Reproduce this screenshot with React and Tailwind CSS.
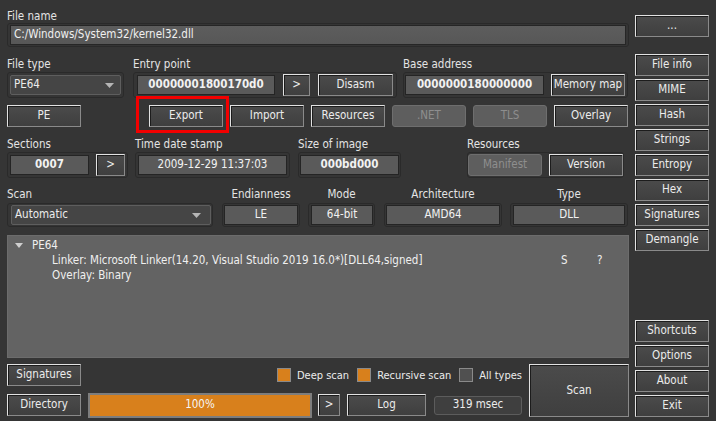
import React from "react";

const BTN =
  "flex items-center justify-center h-[22px] shrink-0 border border-t-[#e2e2e2] border-l-[#e2e2e2] border-r-[#8a8a8a] border-b-[#8a8a8a] bg-linear-to-b from-[#4b4b4b] to-[#3f3f3f] shadow-[inset_1px_1px_0_#1c1c1c] text-[#ececec] leading-none";
const DIS =
  "flex items-center justify-center h-[22px] shrink-0 border border-[#6e6e6e] rounded-[3px] bg-[#5e5e5e] text-[#8e8e8e] leading-none";
const FRAME = "flex items-center border border-[#2a2a2a] rounded-[3px]";
const FIELD =
  "flex items-center justify-center h-[20px] shrink-0 bg-[#5a5a5a] border border-[#242424] text-[#f2f2f2] leading-none";

function Btn({ className = "", children }) {
  return <div className={`${BTN} ${className}`}>{children}</div>;
}

function Label({ className = "", children }) {
  return <div className={`h-[15px] leading-[16px] text-[#e4e4e4] whitespace-nowrap ${className}`}>{children}</div>;
}

function Arrow() {
  return (
    <svg width="9" height="5" viewBox="0 0 9 5">
      <path d="M0 0h9L4.5 5z" fill="#b5b5b5" />
    </svg>
  );
}

function Combo({ className = "", text, arrowPad = "pr-[8px]" }) {
  return (
    <div
      className={`flex items-center justify-between h-[20px] bg-[#454545] border border-[#5e5e5e] rounded-[2px] pl-[3px] ${arrowPad} ${className}`}
    >
      <span className="leading-none text-[#ececec]">{text}</span>
      <Arrow />
    </div>
  );
}

function Check({ on, label }) {
  return (
    <div className="flex items-center">
      <div
        className={`w-[14px] h-[14px] border border-[#8a8a8a] ${on ? "bg-[#d8801c]" : "bg-[#505050]"}`}
      />
      <span className="ml-[6px] leading-none text-[11px] text-[#ececec]">{label}</span>
    </div>
  );
}

export default function App() {
  return (
    <div className="w-[716px] h-[421px] overflow-hidden bg-[#353535] flex pl-[7px] gap-[6px] text-[11.5px] text-[#e6e6e6] font-['DejaVu_Sans_Condensed','Liberation_Sans',Arial,sans-serif]">
      {/* Left column */}
      <div className="flex flex-col w-[622px] pt-[8px]">
        <Label>File name</Label>
        <div className="border border-[#2a2a2a] rounded-[3px] px-[2px] py-[1px]">
          <div className="h-[20px] bg-linear-to-b from-[#5d5d5d] to-[#575757] border border-[#262626] flex items-center px-[3px] leading-none text-[#f0f0f0]">
            C:/Windows/System32/kernel32.dll
          </div>
        </div>

        {/* Row: file type / entry point / base address */}
        <div className="flex mt-[9px]">
          <div className="flex flex-col w-[117px]">
            <Label>File type</Label>
            <div className={`${FRAME} mt-[1px] h-[26px] px-[2px]`}>
              <Combo className="w-[111px]" text="PE64" arrowPad="pr-[6px]" />
            </div>
          </div>
          <div className="flex flex-col ml-[9px]">
            <Label>Entry point</Label>
            <div className={`${FRAME} mt-[1px] h-[26px] px-[3px] gap-[8px]`}>
              <div className={`${FIELD} w-[138px] font-bold`}>00000001800170d0</div>
              <Btn className="w-[27px]">&gt;</Btn>
              <Btn className="w-[75px]">Disasm</Btn>
            </div>
          </div>
          <div className="flex flex-col ml-[6px]">
            <Label>Base address</Label>
            <div className={`${FRAME} mt-[1px] h-[26px] pl-[1px] pr-[2px] gap-[7px]`}>
              <div className={`${FIELD} w-[139px] font-bold`}>0000000180000000</div>
              <Btn className="w-[74px]">Memory map</Btn>
            </div>
          </div>
        </div>

        {/* Row: buttons */}
        <div className="flex mt-[7px]">
          <Btn className="w-[74px]">PE</Btn>
          <div className="relative ml-[68px]">
            <Btn className="w-[74px]">Export</Btn>
            <div className="absolute left-[-13px] right-[-6px] top-[-9px] bottom-[-6px] border-[3px] border-[#f20000]" />
          </div>
          <Btn className="w-[74px] ml-[7px]">Import</Btn>
          <Btn className="w-[74px] ml-[7px]">Resources</Btn>
          <div className={`${DIS} w-[74px] ml-[7px]`}>.NET</div>
          <div className={`${DIS} w-[74px] ml-[7px]`}>TLS</div>
          <Btn className="w-[74px] ml-[7px]">Overlay</Btn>
        </div>

        {/* Row: sections / time / size / resources */}
        <div className="flex mt-[9px]">
          <div className="flex flex-col">
            <Label>Sections</Label>
            <div className={`${FRAME} mt-[1px] h-[26px] pl-[2px] pr-[2px] gap-[7px]`}>
              <div className={`${FIELD} w-[79px] font-bold`}>0007</div>
              <Btn className="w-[29px]">&gt;</Btn>
            </div>
          </div>
          <div className="flex flex-col ml-[7px]">
            <Label>Time date stamp</Label>
            <div className={`${FRAME} mt-[1px] h-[26px] px-[2px]`}>
              <div className={`${FIELD} w-[149px]`}>2009-12-29 11:37:03</div>
            </div>
          </div>
          <div className="flex flex-col ml-[8px]">
            <Label>Size of image</Label>
            <div className={`${FRAME} mt-[1px] h-[26px] px-[1px]`}>
              <div className={`${FIELD} w-[99px] font-bold`}>000bd000</div>
            </div>
          </div>
          <div className="flex flex-col ml-[66px]">
            <Label>Resources</Label>
            <div className={`${FRAME} mt-[1px] h-[26px] px-[0px] gap-[7px]`}>
              <div className={`${DIS} w-[74px]`}>Manifest</div>
              <Btn className="w-[74px]">Version</Btn>
            </div>
          </div>
        </div>

        {/* Row: scan / endianness / mode / architecture / type */}
        <div className="flex mt-[8px]">
          <div className="flex flex-col">
            <Label>Scan</Label>
            <div className={`${FRAME} mt-[2px] h-[24px] pl-[3px] pr-[1px]`}>
              <Combo className="w-[200px]" text="Automatic" arrowPad="pr-[9px]" />
            </div>
          </div>
          <div className="flex flex-col ml-[9px]">
            <Label className="text-center">Endianness</Label>
            <div className={`${FRAME} mt-[2px] h-[24px] px-[1px]`}>
              <div className={`${FIELD} w-[74px]`}>LE</div>
            </div>
          </div>
          <div className="flex flex-col ml-[8px]">
            <Label className="text-center">Mode</Label>
            <div className={`${FRAME} mt-[2px] h-[24px] pl-[2px] pr-[1px]`}>
              <div className={`${FIELD} w-[62px]`}>64-bit</div>
            </div>
          </div>
          <div className="flex flex-col ml-[9px]">
            <Label className="text-center">Architecture</Label>
            <div className={`${FRAME} mt-[2px] h-[24px] px-[1px]`}>
              <div className={`${FIELD} w-[114px]`}>AMD64</div>
            </div>
          </div>
          <div className="flex flex-col ml-[8px]">
            <Label className="text-center">Type</Label>
            <div className={`${FRAME} mt-[2px] h-[24px] px-[2px]`}>
              <div className={`${FIELD} w-[112px]`}>DLL</div>
            </div>
          </div>
        </div>

        {/* Log tree area */}
        <div className="mt-[8px] h-[123px] bg-[#636363] border border-[#6c6c6c] pt-[2px] text-[#f0f0f0]">
          <div className="flex items-center h-[15px] leading-[15px]">
            <svg className="ml-[7px]" width="8" height="5" viewBox="0 0 8 5">
              <path d="M0 0h8L4 5z" fill="#cfcfcf" />
            </svg>
            <span className="ml-[9px]">PE64</span>
          </div>
          <div className="flex h-[15px] leading-[15px] pl-[44px]">
            <span className="w-[509px] whitespace-nowrap">
              Linker: Microsoft Linker(14.20, Visual Studio 2019 16.0*)[DLL64,signed]
            </span>
            <span className="w-[36px]">S</span>
            <span>?</span>
          </div>
          <div className="h-[15px] leading-[15px] pl-[44px]">Overlay: Binary</div>
        </div>

        {/* Bottom area */}
        <div className="flex mt-[6px] gap-[7px]">
          <div className="flex flex-col w-[515px]">
            <div className="flex items-center h-[22px]">
              <Btn className="w-[74px]">Signatures</Btn>
              <div className="ml-auto flex items-center gap-[8px]">
                <Check on label="Deep scan" />
                <Check on label="Recursive scan" />
                <Check label="All types" />
              </div>
            </div>
            <div className="flex items-center h-[22px] mt-[8px]">
              <Btn className="w-[74px]">Directory</Btn>
              <div className="ml-[7px] w-[224px] h-[25px] border-2 border-[#7d7d7d] bg-[#d8801c] flex items-center justify-center leading-none text-[#f6f6f6]">
                100%
              </div>
              <Btn className="w-[22px] ml-[6px]">&gt;</Btn>
              <Btn className="w-[79px] ml-[7px]">Log</Btn>
              <div className="ml-[8px] w-[88px] h-[19px] flex items-center justify-center bg-[#3f3f3f] border border-[#5c5c5c] rounded-[3px] leading-none text-[#ececec]">
                319 msec
              </div>
            </div>
          </div>
          <Btn className="w-[100px] h-[53px]">Scan</Btn>
        </div>
      </div>

      {/* Right column */}
      <div className="flex flex-col w-[74px] pt-[15px] pb-[4px]">
        <Btn className="w-[74px]">...</Btn>
        <div className="flex flex-col gap-[3px] mt-[17px]">
          <Btn className="w-[74px]">File info</Btn>
          <Btn className="w-[74px]">MIME</Btn>
          <Btn className="w-[74px]">Hash</Btn>
          <Btn className="w-[74px]">Strings</Btn>
          <Btn className="w-[74px]">Entropy</Btn>
          <Btn className="w-[74px]">Hex</Btn>
          <Btn className="w-[74px]">Signatures</Btn>
          <Btn className="w-[74px]">Demangle</Btn>
        </div>
        <div className="flex flex-col gap-[3px] mt-auto">
          <Btn className="w-[74px]">Shortcuts</Btn>
          <Btn className="w-[74px]">Options</Btn>
          <Btn className="w-[74px]">About</Btn>
          <Btn className="w-[74px]">Exit</Btn>
        </div>
      </div>
    </div>
  );
}
